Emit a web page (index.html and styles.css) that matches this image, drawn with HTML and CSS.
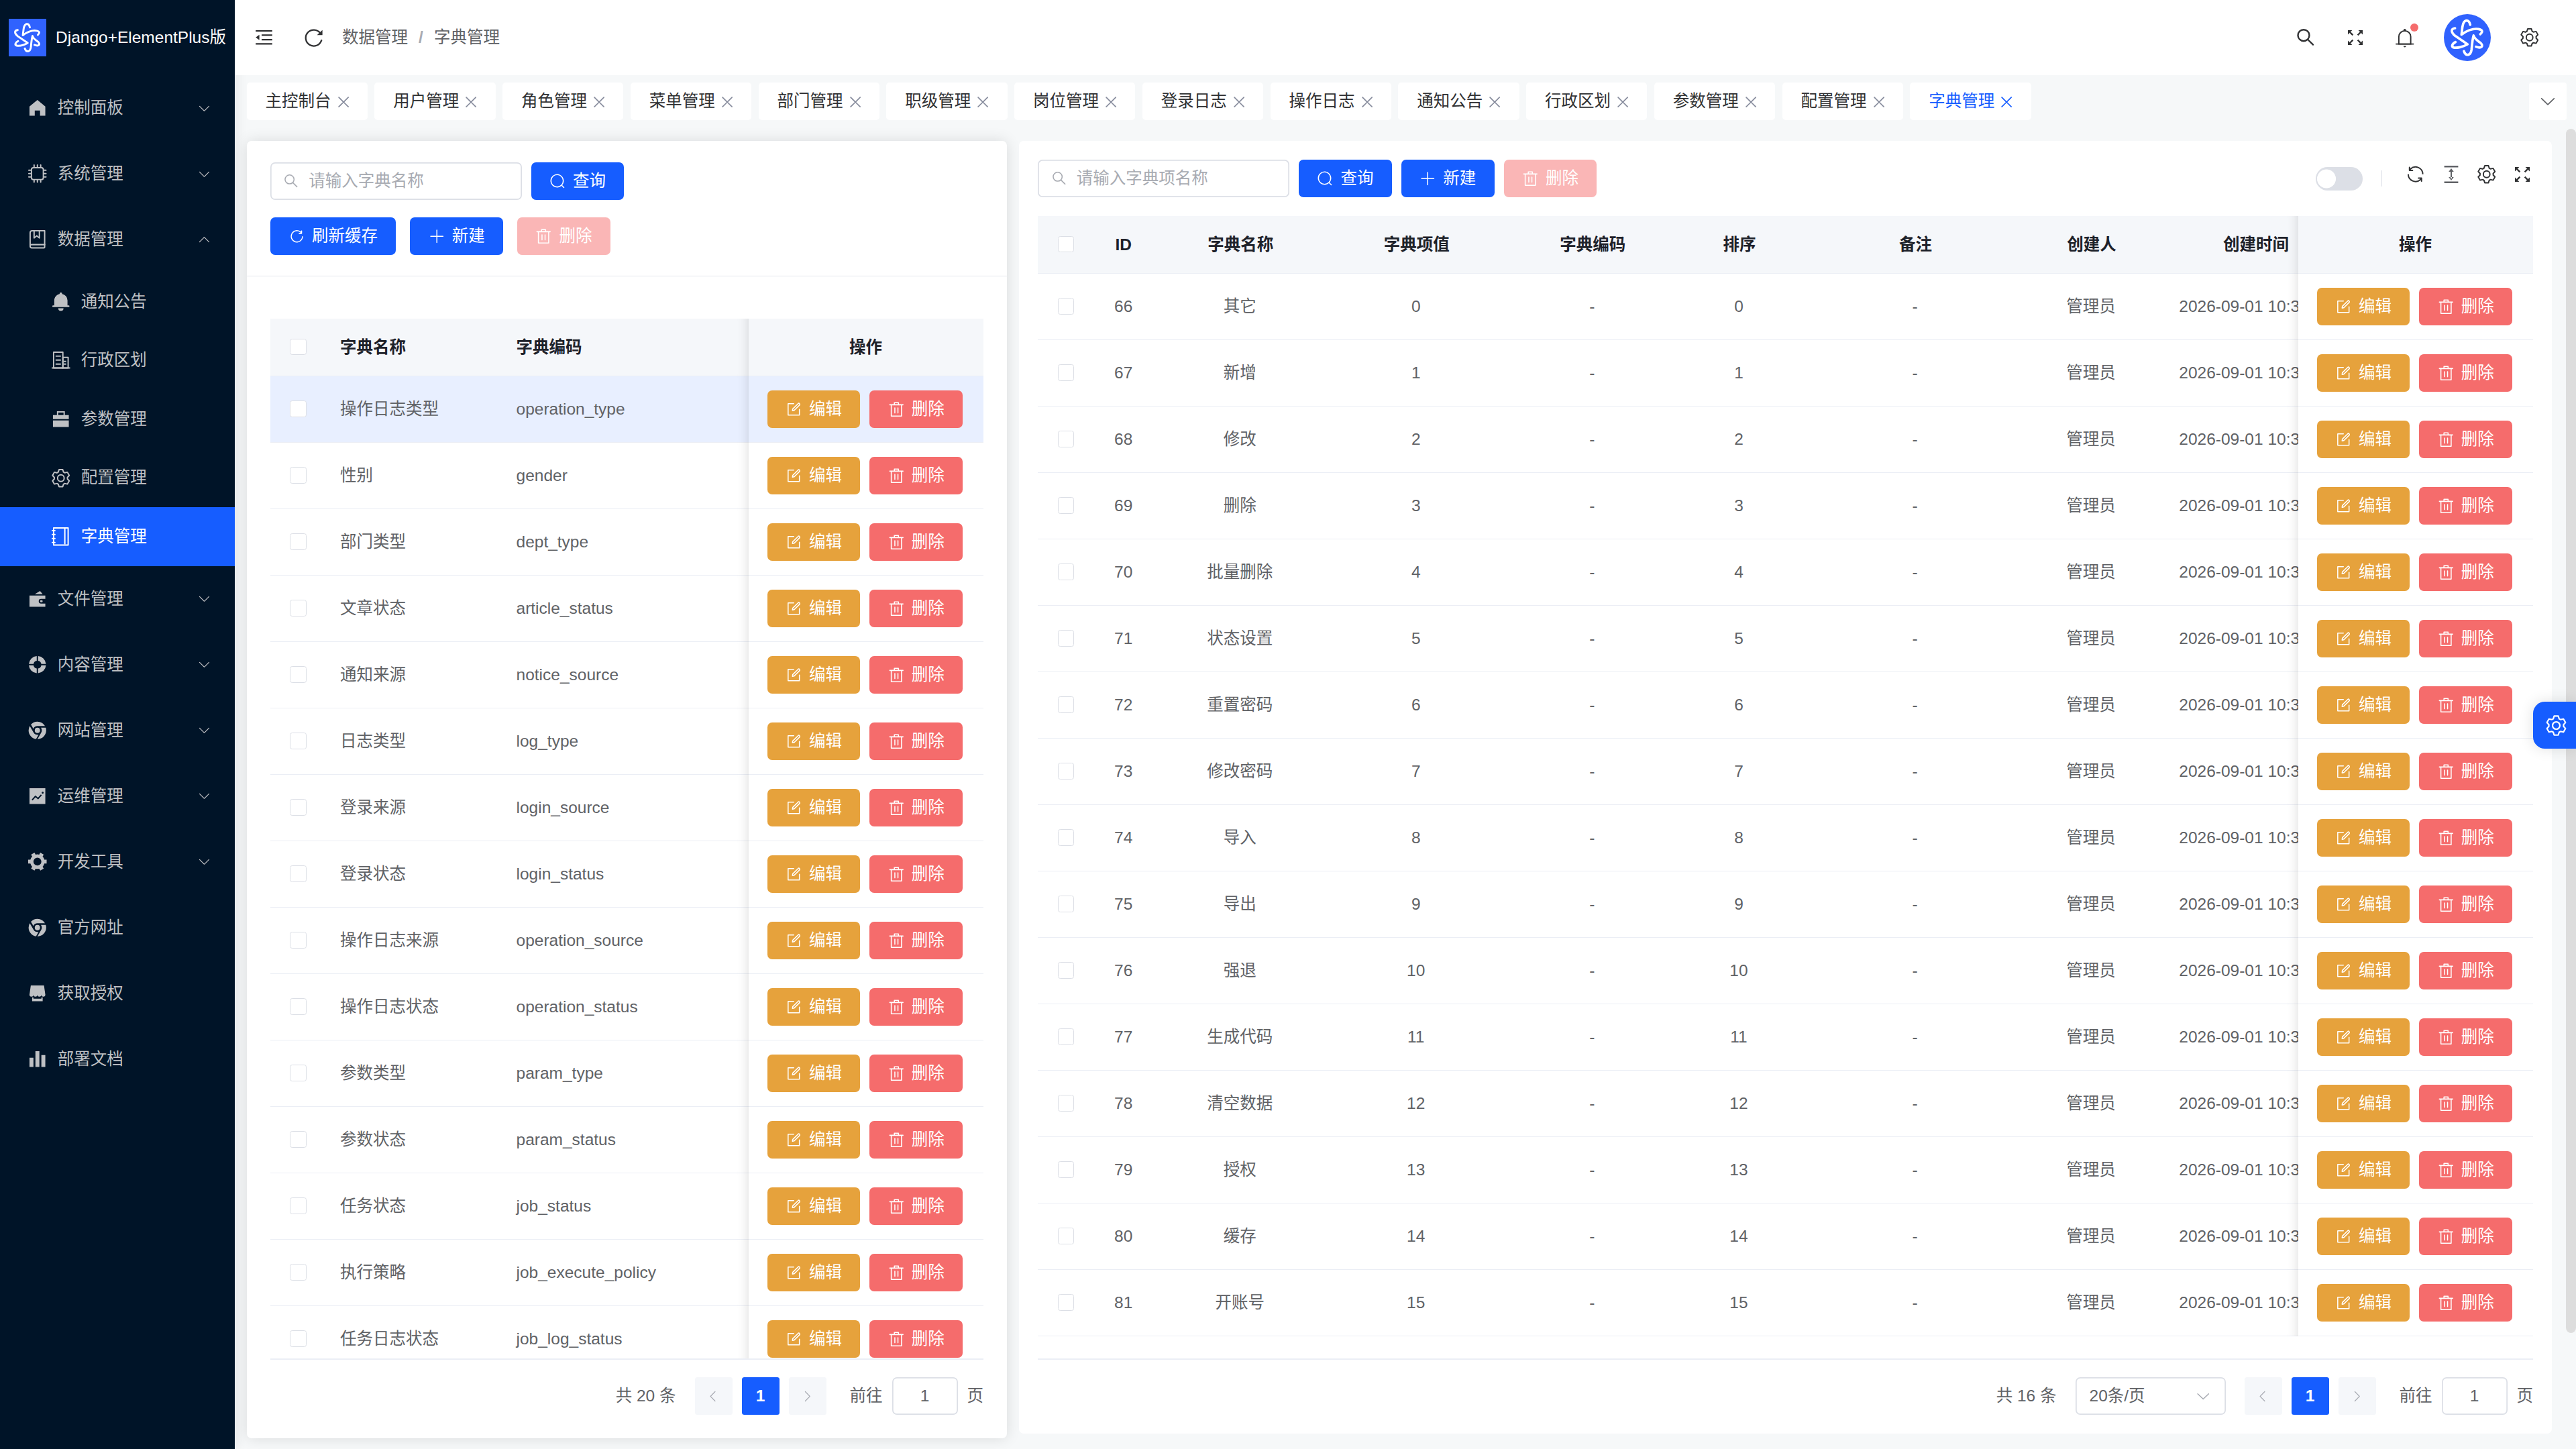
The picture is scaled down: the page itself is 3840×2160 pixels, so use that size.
FILE: index.html
```html
<!DOCTYPE html>
<html lang="zh-CN">
<head>
<meta charset="utf-8">
<title>字典管理</title>
<link rel="stylesheet" href="styles.css">
</head>
<body>
<svg class="sprite" aria-hidden="true">
  <symbol id="i-down" viewBox="0 0 1024 1024"><path d="M831.872 340.864 512 652.672 192.128 340.864a30.592 30.592 0 0 0-42.752 0 29.12 29.12 0 0 0 0 41.6L489.664 714.24a32 32 0 0 0 44.672 0l340.288-331.712a29.12 29.12 0 0 0 0-41.728 30.592 30.592 0 0 0-42.752 0z"/></symbol>
  <symbol id="i-left" viewBox="0 0 1024 1024"><path d="M609.408 149.376 277.76 489.6a32 32 0 0 0 0 44.672l331.648 340.352a29.12 29.12 0 0 0 41.728 0 30.592 30.592 0 0 0 0-42.752L339.264 511.936l311.872-319.872a30.592 30.592 0 0 0 0-42.688 29.12 29.12 0 0 0-41.728 0z"/></symbol>
  <symbol id="i-right" viewBox="0 0 1024 1024"><path d="M340.864 149.312a30.592 30.592 0 0 0 0 42.752L652.736 512 340.864 831.872a30.592 30.592 0 0 0 0 42.752 29.12 29.12 0 0 0 41.728 0L714.24 534.336a32 32 0 0 0 0-44.672L382.592 149.376a29.12 29.12 0 0 0-41.728 0z"/></symbol>
  <symbol id="i-close" viewBox="0 0 1024 1024"><path d="M764.288 214.592 512 466.88 259.712 214.592a31.936 31.936 0 0 0-45.12 45.12L466.752 512 214.528 764.224a31.936 31.936 0 1 0 45.12 45.184L512 557.184l252.288 252.288a31.936 31.936 0 0 0 45.12-45.12L557.12 512.064l252.288-252.352a31.936 31.936 0 1 0-45.12-45.184z"/></symbol>
  <symbol id="i-query" viewBox="0 0 1024 1024"><path d="m795.904 750.72 124.992 124.928a32 32 0 0 1-45.248 45.248L750.656 795.904a416 416 0 1 1 45.248-45.248zM480 832a352 352 0 1 0 0-704 352 352 0 0 0 0 704z"/></symbol>
  <symbol id="i-magnifier" viewBox="0 0 28 28"><g fill="none" stroke="currentColor" stroke-width="var(--w,2.4)" stroke-linecap="round"><circle cx="11" cy="10.7" r="8.5"/><path d="M17.3 17 25 24.6"/></g></symbol>
  <symbol id="i-refresh-right" viewBox="0 0 1024 1024"><path d="M784.512 230.272v-50.56a32 32 0 1 1 64 0v149.056a32 32 0 0 1-32 32H667.52a32 32 0 1 1 0-64h92.992A320 320 0 1 0 844.8 513.152h64a384 384 0 1 1-124.288-282.88z"/></symbol>
  <symbol id="i-refresh" viewBox="0 0 1024 1024"><path d="M771.776 794.88A384 384 0 0 1 128 512h64a320 320 0 0 0 555.712 216.448H654.72a32 32 0 1 1 0-64h149.056a32 32 0 0 1 32 32v148.928a32 32 0 1 1-64 0v-50.56zM276.288 295.616h92.992a32 32 0 0 1 0 64H220.16a32 32 0 0 1-32-32V178.56a32 32 0 0 1 64 0v50.56A384 384 0 0 1 896.128 512h-64a320 320 0 0 0-555.776-216.384z"/></symbol>
  <symbol id="i-plus" viewBox="0 0 1024 1024"><path d="M480 480V128a32 32 0 0 1 64 0v352h352a32 32 0 1 1 0 64H544v352a32 32 0 1 1-64 0V544H128a32 32 0 0 1 0-64h352z"/></symbol>
  <symbol id="i-delete" viewBox="0 0 1024 1024"><path d="M160 256H96a32 32 0 0 1 0-64h256V95.936a32 32 0 0 1 32-32h256a32 32 0 0 1 32 32V192h256a32 32 0 1 1 0 64h-64v672a32 32 0 0 1-32 32H192a32 32 0 0 1-32-32V256zm448-64v-64H416v64h192zM224 896h576V256H224v640zm192-128a32 32 0 0 1-32-32V416a32 32 0 0 1 64 0v320a32 32 0 0 1-32 32zm192 0a32 32 0 0 1-32-32V416a32 32 0 0 1 64 0v320a32 32 0 0 1-32 32z"/></symbol>
  <symbol id="i-edit" viewBox="0 0 1024 1024"><path d="M832 512a32 32 0 1 1 64 0v352a32 32 0 0 1-32 32H160a32 32 0 0 1-32-32V160a32 32 0 0 1 32-32h352a32 32 0 0 1 0 64H192v640h640V512z"/><path d="m469.952 554.24 52.8-7.552L847.104 222.4a32 32 0 1 0-45.248-45.248L477.44 501.44l-7.552 52.8zm422.4-422.4a96 96 0 0 1 0 135.808l-331.84 331.84a32 32 0 0 1-18.112 9.088L436.8 623.68a32 32 0 0 1-36.224-36.224l15.104-105.6a32 32 0 0 1 9.024-18.112l331.904-331.84a96 96 0 0 1 135.744 0z"/></symbol>
  <symbol id="i-setting" viewBox="0 0 1024 1024"><path d="M600.704 64a32 32 0 0 1 30.464 22.208l35.2 109.376c14.784 7.232 28.928 15.36 42.432 24.512l112.384-24.192a32 32 0 0 1 34.432 15.36L944.32 364.8a32 32 0 0 1-4.032 37.504l-77.12 85.12a357.12 357.12 0 0 1 0 49.024l77.12 85.248a32 32 0 0 1 4.032 37.504l-88.704 153.6a32 32 0 0 1-34.432 15.296L708.8 803.904c-13.44 9.088-27.648 17.28-42.368 24.512l-35.264 109.376A32 32 0 0 1 600.704 960H423.296a32 32 0 0 1-30.464-22.208L357.696 828.48a351.616 351.616 0 0 1-42.56-24.64l-112.32 24.256a32 32 0 0 1-34.432-15.36L79.68 659.2a32 32 0 0 1 4.032-37.504l77.12-85.248a357.12 357.12 0 0 1 0-48.896l-77.12-85.248A32 32 0 0 1 79.68 364.8l88.704-153.6a32 32 0 0 1 34.432-15.296l112.32 24.256c13.568-9.152 27.776-17.408 42.56-24.64l35.2-109.312A32 32 0 0 1 423.232 64H600.64zm-23.424 64H446.72l-36.352 113.088-24.512 11.968a294.113 294.113 0 0 0-34.816 20.096l-22.656 15.36-116.224-25.088-65.28 113.152 79.68 88.192-1.92 27.136a293.12 293.12 0 0 0 0 40.192l1.92 27.136-79.808 88.192 65.344 113.152 116.224-25.024 22.656 15.296a294.113 294.113 0 0 0 34.816 20.096l24.512 11.968L446.72 896h130.688l36.48-113.152 24.448-11.904a288.282 288.282 0 0 0 34.752-20.096l22.592-15.296 116.288 25.024 65.28-113.152-79.744-88.192 1.92-27.136a293.12 293.12 0 0 0 0-40.256l-1.92-27.136 79.808-88.128-65.344-113.152-116.288 24.96-22.592-15.232a287.616 287.616 0 0 0-34.752-20.096l-24.448-11.904L577.344 128zM512 320a192 192 0 1 1 0 384 192 192 0 0 1 0-384zm0 64a128 128 0 1 0 0 256 128 128 0 0 0 0-256z"/></symbol>
  <symbol id="i-bell" viewBox="0 0 1024 1024"><path d="M512 64a64 64 0 0 1 64 64v64H448v-64a64 64 0 0 1 64-64z"/><path d="M256 768h512V448a256 256 0 1 0-512 0v320zm256-640a320 320 0 0 1 320 320v384H192V448a320 320 0 0 1 320-320z"/><path d="M96 768h832q32 0 32 32t-32 32H96q-32 0-32-32t32-32zm352 128h128a64 64 0 0 1-128 0z"/></symbol>
  <symbol id="i-bell-filled" viewBox="0 0 1024 1024"><path d="M640 832a128 128 0 0 1-256 0h256zm192-64H134.4a38.4 38.4 0 0 1 0-76.8H192V448c0-154.88 110.08-284.16 256.32-313.6a64 64 0 1 1 127.36 0A320.128 320.128 0 0 1 832 448v243.2h57.6a38.4 38.4 0 0 1 0 76.8H832z"/></symbol>
  <symbol id="i-home" viewBox="0 0 1024 1024"><path d="M512 128 128 447.936V896h255.936V640H640v256h255.936V447.936z"/></symbol>
  <symbol id="i-cpu" viewBox="0 0 1024 1024"><g fill="none" stroke="currentColor" stroke-width="64" stroke-linecap="round"><rect x="224" y="224" width="576" height="576" rx="96"/><path d="M512 96v100M672 96v100M352 96v100M512 928V828M672 928V828M352 928V828M96 512h100M96 672h100M96 352h100M928 512H828M928 672H828M928 352H828"/></g></symbol>
  <symbol id="i-collection" viewBox="0 0 1024 1024"><path d="M192 736h640V128H256a64 64 0 0 0-64 64v544zm64-672h608a32 32 0 0 1 32 32v672a32 32 0 0 1-32 32H160l-32 57.536V192A128 128 0 0 1 256 64z"/><path d="M240 800a48 48 0 1 0 0 96h592v-96H240zm0-64h656v160a64 64 0 0 1-64 64H240a112 112 0 0 1 0-224zm144-608v250.88l96-76.8 96 76.8V128H384zm-64-64h320v381.44a32 32 0 0 1-51.968 24.96L480 384l-108.032 86.4A32 32 0 0 1 320 445.44V64z"/></symbol>
  <symbol id="i-office" viewBox="0 0 1024 1024"><path d="M192 128v704h384V128H192zm-32-64h448a32 32 0 0 1 32 32v768a32 32 0 0 1-32 32H160a32 32 0 0 1-32-32V96a32 32 0 0 1 32-32z"/><path d="M256 256h256v64H256v-64zm0 192h256v64H256v-64zm0 192h256v64H256v-64zm384-128h128v64H640v-64zm0 128h128v64H640v-64zM64 832h896v64H64v-64z"/><path d="M640 384v448h192V384H640zm-32-64h256a32 32 0 0 1 32 32v512a32 32 0 0 1-32 32H608a32 32 0 0 1-32-32V352a32 32 0 0 1 32-32z"/></symbol>
  <symbol id="i-briefcase" viewBox="0 0 1024 1024"><path d="M320 320V128h384v192h192v192H128V320h192zM128 576h768v320H128V576zm256-256h256.064V192H384v128z"/></symbol>
  <symbol id="i-notebook" viewBox="0 0 1024 1024"><path d="M192 128v768h640V128H192zm-32-64h704a32 32 0 0 1 32 32v832a32 32 0 0 1-32 32H160a32 32 0 0 1-32-32V96a32 32 0 0 1 32-32z"/><path d="M672 128h64v768h-64zM96 192h128q32 0 32 32t-32 32H96q-32 0-32-32t32-32zm0 192h128q32 0 32 32t-32 32H96q-32 0-32-32t32-32zm0 192h128q32 0 32 32t-32 32H96q-32 0-32-32t32-32zm0 192h128q32 0 32 32t-32 32H96q-32 0-32-32t32-32z"/></symbol>
  <symbol id="i-wallet" viewBox="0 0 1024 1024"><path d="M688 512a112 112 0 1 0 0 224h208v160H128V352h768v160H688zm32 160h-32a48 48 0 0 1 0-96h32a48 48 0 0 1 0 96zm-80-544 128 160H384l256-160z"/></symbol>
  <symbol id="i-help" viewBox="0 0 1024 1024"><path d="M926.784 480H701.312A192.512 192.512 0 0 0 544 322.688V97.216A416.064 416.064 0 0 1 926.784 480zm0 64A416.064 416.064 0 0 1 544 926.784V701.312A192.512 192.512 0 0 0 701.312 544h225.472zM97.28 544h225.472A192.512 192.512 0 0 0 480 701.312v225.472A416.064 416.064 0 0 1 97.216 544zm0-64A416.064 416.064 0 0 1 480 97.216v225.472A192.512 192.512 0 0 0 322.688 480H97.216z"/></symbol>
  <symbol id="i-chrome" viewBox="0 0 1024 1024"><path d="M938.67 512.01c0-44.59-6.82-87.6-19.54-128H682.67a212.372 212.372 0 0 1 42.67 128c.06 38.71-10.45 76.7-30.42 109.87l-182.91 316.8c235.65-.01 426.66-191.02 426.66-426.67z"/><circle cx="512" cy="512" r="128"/><path d="M394.45 333.96A213.336 213.336 0 0 1 512 298.67h369.58A426.503 426.503 0 0 0 512 85.34a425.644 425.644 0 0 0-314.36 138.2l118.14 204.63a213.397 213.397 0 0 1 78.67-94.21z"/><path d="M512.01 725.34a213.32 213.32 0 0 1-184.77-106.67L142.49 298.56A425.9 425.9 0 0 0 85.34 512c0 212.64 155.56 388.85 359.36 421l118.2-204.7a213.4 213.4 0 0 1-50.9-2.96z"/></symbol>
  <symbol id="i-trend" viewBox="0 0 1024 1024"><path d="M128 896V128h768v768H128zm291.712-327.296 128 102.4 180.16-201.792-47.744-42.624-139.84 156.608-128-102.4-180.16 201.792 47.744 42.624 139.84-156.608zM816 352a48 48 0 1 0-96 0 48 48 0 0 0 96 0z"/></symbol>
  <symbol id="i-tools" viewBox="0 0 1024 1024"><path d="M764.416 254.72a351.68 351.68 0 0 1 86.336 149.184H960v192.064H850.752a351.68 351.68 0 0 1-86.336 149.312l54.72 94.72-166.272 96-54.592-94.72a352.64 352.64 0 0 1-172.48 0L371.136 936l-166.272-96 54.72-94.72a351.68 351.68 0 0 1-86.336-149.312H64v-192h109.248a351.68 351.68 0 0 1 86.336-149.312L204.8 160l166.208-96h.192l54.656 94.592a352.64 352.64 0 0 1 172.48 0L652.8 64h.128L819.2 160l-54.72 94.72zM704 499.968a192 192 0 1 0-384 0 192 192 0 0 0 384 0z"/></symbol>
  <symbol id="i-shop" viewBox="0 0 1024 1024"><path d="M704 704h64v192H256V704h64v64h384v-64zm188.544-152.192C894.528 559.616 896 567.616 896 576a96 96 0 1 1-192 0 96 96 0 1 1-192 0 96 96 0 1 1-192 0 96 96 0 1 1-192 0c0-8.384 1.408-16.384 3.392-24.192L192 128h640l60.544 423.808z"/></symbol>
  <symbol id="i-histogram" viewBox="0 0 1024 1024"><path d="M416 896V128h192v768H416zm-288 0V448h192v448H128zm576 0V320h192v576H704z"/></symbol>
  <symbol id="i-fold" viewBox="0 0 28 28"><path d="M1.2 3h24.6v2.3H1.2zM10 9.3h15.8v2.3H10zM10 15.9h15.8v2.3H10zM1.2 22.3h24.6v2.3H1.2zM6.6 9.8v8L1.2 13.8z"/></symbol>
  <symbol id="i-reload" viewBox="0 0 28 28"><path d="M25.2 18.2A12 12 0 1 1 23.4 7.4" fill="none" stroke="currentColor" stroke-width="2.3" stroke-linecap="round"/><path d="M26.6 2.8v7.4h-8z"/></symbol>
  <symbol id="i-full" viewBox="0 0 28 28"><path d="m6 6 4.4 4.4M22 6l-4.4 4.4M6 22l4.4-4.4M22 22l-4.4-4.4" stroke="currentColor" stroke-width="2.4"/><path d="M3 3h6.4L3 9.4zM25 3h-6.4L25 9.4zM3 25h6.4L3 18.6zM25 25h-6.4l6.4-6.4z"/></symbol>
  <symbol id="i-height" viewBox="0 0 28 28"><path d="M3.6 1h20.8v2.6H3.6zM3.6 24.4h20.8V27H3.6zM13 8h2v12h-2zM14 5l3.8 5h-7.6zM14 23l3.8-5h-7.6z"/></symbol>
  <symbol id="i-star" viewBox="0 0 210 210"><g fill="none" stroke="#fff" stroke-width="11" stroke-linecap="round" stroke-linejoin="round"><path d="M118 48C112 20 88 22 83 58L79 92C98 76 130 62 156 67C175 71 174 80 163 90"/><path d="M50 63C30 66 32 82 50 97L106 135C84 148 58 152 45 150C32 146 36 134 52 125"/><path d="M90 166C98 190 120 187 124 158C126 135 128 112 133 96C138 112 150 118 163 128C180 142 168 156 144 146"/></g></symbol>
</svg>

<div class="layout">
  <aside class="sidebar">
    <div class="brand"><span class="brand-logo"><svg><use href="#i-star"/></svg></span><span>Django+ElementPlus版</span></div>
    <nav class="menu">
      <a class="item"><svg><use href="#i-home"/></svg>控制面板<svg class="arrow"><use href="#i-down"/></svg></a>
      <a class="item"><svg><use href="#i-cpu"/></svg>系统管理<svg class="arrow"><use href="#i-down"/></svg></a>
      <a class="item"><svg><use href="#i-collection"/></svg>数据管理<svg class="arrow open"><use href="#i-down"/></svg></a>
      <a class="item sub"><svg><use href="#i-bell-filled"/></svg>通知公告</a>
      <a class="item sub"><svg><use href="#i-office"/></svg>行政区划</a>
      <a class="item sub"><svg><use href="#i-briefcase"/></svg>参数管理</a>
      <a class="item sub"><svg><use href="#i-setting"/></svg>配置管理</a>
      <a class="item sub active"><svg><use href="#i-notebook"/></svg>字典管理</a>
      <a class="item"><svg><use href="#i-wallet"/></svg>文件管理<svg class="arrow"><use href="#i-down"/></svg></a>
      <a class="item"><svg><use href="#i-help"/></svg>内容管理<svg class="arrow"><use href="#i-down"/></svg></a>
      <a class="item"><svg><use href="#i-chrome"/></svg>网站管理<svg class="arrow"><use href="#i-down"/></svg></a>
      <a class="item"><svg><use href="#i-trend"/></svg>运维管理<svg class="arrow"><use href="#i-down"/></svg></a>
      <a class="item"><svg><use href="#i-tools"/></svg>开发工具<svg class="arrow"><use href="#i-down"/></svg></a>
      <a class="item"><svg><use href="#i-chrome"/></svg>官方网址</a>
      <a class="item"><svg><use href="#i-shop"/></svg>获取授权</a>
      <a class="item"><svg><use href="#i-histogram"/></svg>部署文档</a>
    </nav>
  </aside>

  <div class="page">
    <header class="topbar">
      <svg class="ic28"><use href="#i-fold"/></svg>
      <svg class="ic28 reload"><use href="#i-reload"/></svg>
      <div class="crumbs"><span>数据管理</span><span class="sep">/</span><span>字典管理</span></div>
      <div class="tools">
        <svg class="ic28"><use href="#i-magnifier"/></svg>
        <svg class="ic28 t-full"><use href="#i-full"/></svg>
        <span class="bell"><svg class="ic31"><use href="#i-bell"/></svg><i class="dot"></i></span>
        <span class="avatar"><svg><use href="#i-star"/></svg></span>
        <svg class="ic31"><use href="#i-setting"/></svg>
      </div>
    </header>

    <div class="tabs" id="tabs"></div>

    <main class="cards">
      <section class="card card-left">
        <div class="search-form">
          <div class="row gap14">
            <label class="input"><svg><use href="#i-magnifier"/></svg>请输入字典名称</label>
            <button class="btn primary"><svg><use href="#i-query"/></svg>查询</button>
          </div>
          <div class="row gap21">
            <button class="btn primary"><svg><use href="#i-refresh-right"/></svg>刷新缓存</button>
            <button class="btn primary"><svg><use href="#i-plus"/></svg>新建</button>
            <button class="btn danger off"><svg><use href="#i-delete"/></svg>删除</button>
          </div>
        </div>
        <div class="table-wrap">
          <table class="dict">
            <colgroup><col class="w-check"><col class="w-name"><col><col class="w-op"></colgroup>
            <thead><tr><th><i class="check"></i></th><th>字典名称</th><th>字典编码</th><th class="fixed">操作</th></tr></thead>
            <tbody id="dict-rows"></tbody>
          </table>
        </div>
        <div class="pager">
          <span>共 20 条</span>
          <div class="pages"><b><svg><use href="#i-left"/></svg></b><b class="on">1</b><b><svg><use href="#i-right"/></svg></b></div>
          <div class="jump"><span>前往</span><span class="num">1</span><span>页</span></div>
        </div>
      </section>

      <section class="card card-right">
        <div class="row gap14">
          <label class="input"><svg><use href="#i-magnifier"/></svg>请输入字典项名称</label>
          <button class="btn primary"><svg><use href="#i-query"/></svg>查询</button>
          <button class="btn primary"><svg><use href="#i-plus"/></svg>新建</button>
          <button class="btn danger off"><svg><use href="#i-delete"/></svg>删除</button>
          <div class="table-tools">
            <span class="switch"></span>
            <span class="divider"></span>
            <div class="tool-icons">
              <svg class="ic31"><use href="#i-refresh"/></svg>
              <svg class="ic28 grey"><use href="#i-height"/></svg>
              <svg class="ic31"><use href="#i-setting"/></svg>
              <svg class="ic28"><use href="#i-full"/></svg>
            </div>
          </div>
        </div>
        <div class="table-wrap">
          <table class="items">
            <colgroup><col class="w-check"><col class="w-id"><col class="w-name"><col class="w-name"><col class="w-name"><col class="w-sort"><col class="w-note"><col class="w-sort"><col class="w-time"><col class="w-op"></colgroup>
            <thead><tr><th><i class="check"></i></th><th>ID</th><th>字典名称</th><th>字典项值</th><th>字典编码</th><th>排序</th><th>备注</th><th>创建人</th><th>创建时间</th><th class="fixed">操作</th></tr></thead>
            <tbody id="item-rows"></tbody>
          </table>
        </div>
        <div class="pager">
          <span>共 16 条</span>
          <span class="select">20条/页<svg><use href="#i-down"/></svg></span>
          <div class="pages"><b><svg><use href="#i-left"/></svg></b><b class="on">1</b><b><svg><use href="#i-right"/></svg></b></div>
          <div class="jump"><span>前往</span><span class="num">1</span><span>页</span></div>
        </div>
      </section>
    </main>
  </div>
</div>

<div class="scroll-thumb"></div>
<div class="float-setting"><svg><use href="#i-setting"/></svg></div>
<script src="script.js"></script>
</body>
</html>
```
FILE: styles.css
```css
* { box-sizing: border-box; }

body {
  margin: 0;
  height: 2160px;
  overflow: hidden;
  position: relative;
  background: #f6f8f9;
  color: #606266;
  font: 24.5px/40px "Liberation Sans", "Noto Sans CJK SC", sans-serif;
}

svg { fill: currentColor; display: block; flex: none; }
.sprite { position: absolute; width: 0; height: 0; }
.ic28 { width: 28px; height: 28px; }
.ic31 { width: 31.5px; height: 31.5px; }

.layout { display: flex; height: 2160px; }

/* sidebar */
.sidebar {
  width: 350px;
  flex: none;
  background: #001428;
  color: #bfc1c4;
  box-shadow: 3.5px 0 14px rgba(29, 35, 41, .07);
}
.brand {
  height: 112px;
  display: flex;
  align-items: center;
  padding-left: 13px;
  gap: 14px;
  color: #fff;
  white-space: nowrap;
}
.brand-logo { width: 56px; height: 56px; background: #3062fe; }
.brand-logo svg { width: 56px; height: 56px; }
.item {
  display: flex;
  align-items: center;
  height: 98px;
  padding: 0 35px 0 40.25px;
}
.item > svg { width: 31.5px; height: 31.5px; margin-right: 14px; }
.item > .arrow { width: 21px; height: 21px; margin: 0 0 0 auto; }
.item > .arrow.open { transform: rotate(180deg); }
.item.sub { height: 87.5px; padding-left: 75.25px; }
.item.active { background: #165dff; color: #fff; }

/* top bar */
.page { flex: 1; min-width: 0; display: flex; flex-direction: column; }
.topbar {
  height: 112px;
  flex: none;
  display: flex;
  align-items: center;
  padding: 0 53.5px 0 30px;
  background: #fff;
  color: #303133;
  position: relative;
}
.reload { margin-left: 46px; }
.crumbs { display: flex; margin-left: 28px; color: #606266; }
.sep { margin: 0 16px 0 16px; width: 7px; color: #a8abb2; font-weight: 700; }
.tools { display: flex; align-items: center; margin-left: auto; }
.t-full { margin-left: 46px; }
.bell { position: relative; margin: 2px 42.5px 0 43.5px; }
.dot {
  position: absolute;
  right: -5px;
  top: -6px;
  width: 12px;
  height: 12px;
  border-radius: 50%;
  background: #f56c6c;
}
.avatar {
  width: 70px;
  height: 70px;
  border-radius: 50%;
  background: #3062fe;
  margin-right: 42.5px;
}
.avatar svg { width: 70px; height: 70px; }

/* tabs */
.tabs {
  display: flex;
  gap: 10.5px;
  padding: 11px 14px 31px 17.5px;
}
.tab {
  display: flex;
  align-items: center;
  width: 180.25px;
  height: 56px;
  padding-left: 28px;
  background: #fff;
  color: #303133;
  border-radius: 5px;
}
.tab svg { width: 26.25px; height: 26.25px; margin: 3px 0 0 5px; color: #868b9c; }
.tab.on, .tab.on svg { color: #165dff; }
.tab-more {
  margin-left: auto;
  width: 56px;
  height: 56px;
  display: grid;
  place-items: center;
  background: #fff;
  border-radius: 4px;
}
.tab-more svg { width: 28px; height: 28px; }

/* cards */
.cards { display: flex; align-items: flex-start; gap: 18px; padding: 0 36px 0 17.5px; }
.card { background: #fff; border-radius: 7px; }
.card-left {
  width: 1133.5px;
  height: 1934px;
  flex: none;
  box-shadow: 0 0 21px rgba(0, 0, 0, .12);
}
.card-right { flex: 1; min-width: 0; height: 1927px; padding: 28px; }
.search-form {
  display: grid;
  gap: 26px;
  padding: 32px 35px 31px;
  height: 202px;
  border-bottom: 1px solid #e4e7ed;
}
.row { display: flex; align-items: center; }
.gap14 { gap: 14px; }
.gap21 { gap: 21px; }

.input {
  display: flex;
  align-items: center;
  width: 375px;
  height: 56px;
  padding-left: 19.25px;
  border-radius: 7px;
  box-shadow: inset 0 0 0 1.75px #dcdfe6;
  color: #a8abb2;
}
.input svg { width: 22px; height: 22px; margin: 0 15.2px 0 1.3px; --w: 2; }

.btn {
  display: inline-flex;
  align-items: center;
  justify-content: center;
  height: 56px;
  padding: 0 27.4px;
  border: 0;
  border-radius: 7px;
  color: #fff;
  font: inherit;
  white-space: nowrap;
}
.btn svg { width: 24.5px; height: 24.5px; margin-right: 10.5px; }
.primary { background: #165dff; }
.warning { background: #e6a23c; }
.danger { background: #f56c6c; }
.danger.off { background: #fab6b6; }

/* tables */
.table-wrap { overflow: hidden; border-bottom: 2px solid #ebeef5; }
.card-left .table-wrap { margin: 63px 35px 0; height: 1552px; }
.card-right .table-wrap { margin-top: 28px; height: 1705px; }
table { table-layout: fixed; border-collapse: separate; border-spacing: 0; }
.dict { width: 1063px; }
.items { width: 2324px; }
.w-check { width: 84px; }
.w-id { width: 87.5px; }
.w-name { width: 262.5px; }
.w-sort { width: 175px; }
.w-note, .w-op { width: 350px; }
.w-time { width: 315px; }
th, td {
  height: 99px;
  padding: 0 14px;
  border-bottom: 1px solid #ebeef5;
  background: #fff;
  text-align: center;
  white-space: nowrap;
}
th { height: 86px; background: #f5f7fa; color: #1d2129; font-weight: 700; }
.items td:nth-child(n+3) { padding-right: 17px; }
.items th:nth-child(n+3) { padding-right: 15px; }
.dict th:nth-child(-n+3), .dict td:nth-child(-n+3) { text-align: left; padding-left: 20.5px; }
.dict th:first-child, .dict td:first-child { text-align: center; padding: 0; }
.current td { background: #e8efff; }
.fixed { position: sticky; right: 0; }
.fixed::before {
  content: "";
  position: absolute;
  top: 0;
  bottom: -1px;
  left: -17.5px;
  width: 17.5px;
  box-shadow: inset -17.5px 0 17.5px -17.5px rgba(0, 0, 0, .15);
}
.check {
  display: inline-block;
  width: 24.5px;
  height: 24.5px;
  margin-bottom: 4px;
  border: 1px solid #dcdfe6;
  border-radius: 3.5px;
  background: #fff;
  vertical-align: middle;
}
.ops { display: flex; gap: 14px; padding-left: 14px; }
.items .ops { padding-left: 13.5px; }

/* pagination */
.pager {
  display: flex;
  justify-content: flex-end;
  align-items: center;
  height: 56px;
  gap: 28px;
  margin-top: 26px;
}
.card-left .pager { padding-right: 35px; }
.pages, .jump { display: flex; align-items: center; gap: 14px; }
.jump { margin-left: 7px; }
.pages b {
  width: 56px;
  height: 56px;
  display: grid;
  place-items: center;
  border-radius: 3.5px;
  background: #f5f7fa;
  color: #a8abb2;
}
.pages b.on { background: #165dff; color: #fff; }
.pages svg { width: 21px; height: 21px; }
.num {
  width: 98px;
  height: 56px;
  line-height: 56px;
  text-align: center;
  border-radius: 7px;
  box-shadow: inset 0 0 0 1.75px #dcdfe6;
}
.select {
  display: flex;
  align-items: center;
  justify-content: space-between;
  width: 224px;
  height: 56px;
  padding: 0 21px;
  border-radius: 7px;
  box-shadow: inset 0 0 0 1.75px #dcdfe6;
}
.select svg { width: 24.5px; height: 24.5px; color: #a8abb2; }

/* table toolbar */
.table-tools { display: flex; align-items: center; margin-left: auto; }
.switch {
  width: 70px;
  height: 35px;
  border-radius: 18px;
  background: radial-gradient(circle at 16px 50%, #fff 13.6px, transparent 14.4px) #dcdfe6;
}
.divider { width: 1px; height: 24px; margin: 0 34px 0 28px; background: #dcdfe6; }
.tool-icons {
  display: flex;
  align-items: center;
  padding: 0 2px 12px 0;
  gap: 23.3px;
  color: #303133;
}
.grey { color: #606266; }

/* overlays */
.scroll-thumb {
  position: absolute;
  right: 0;
  top: 192px;
  width: 15.5px;
  height: 1795px;
  border-radius: 8px;
  background: #ddd;
}
.float-setting {
  position: absolute;
  right: 0;
  top: 1046px;
  width: 64px;
  height: 70px;
  padding: 17.5px 0 0 17px;
  border-radius: 17.5px 0 0 17.5px;
  background: #165dff;
  color: #fff;
  box-shadow: 0 0 21px rgba(0, 0, 0, .12);
}
.float-setting svg { width: 35px; height: 35px; }
```
FILE: script.js
```js
const icon = (name) => `<svg><use href="#i-${name}"/></svg>`;

const tabs = ['主控制台', '用户管理', '角色管理', '菜单管理', '部门管理', '职级管理', '岗位管理',
  '登录日志', '操作日志', '通知公告', '行政区划', '参数管理', '配置管理', '字典管理'];
document.getElementById('tabs').innerHTML = tabs
  .map((t) => `<div class="tab${t === '字典管理' ? ' on' : ''}">${t}${icon('close')}</div>`)
  .join('') + `<div class="tab-more">${icon('down')}</div>`;

const check = '<td><i class="check"></i></td>';
const ops = `<td class="fixed"><div class="ops"><button class="btn warning">${icon('edit')}编辑</button><button class="btn danger">${icon('delete')}删除</button></div></td>`;

const dicts = [
  ['操作日志类型', 'operation_type'], ['性别', 'gender'], ['部门类型', 'dept_type'],
  ['文章状态', 'article_status'], ['通知来源', 'notice_source'], ['日志类型', 'log_type'],
  ['登录来源', 'login_source'], ['登录状态', 'login_status'], ['操作日志来源', 'operation_source'],
  ['操作日志状态', 'operation_status'], ['参数类型', 'param_type'], ['参数状态', 'param_status'],
  ['任务状态', 'job_status'], ['执行策略', 'job_execute_policy'], ['任务日志状态', 'job_log_status'],
];
document.getElementById('dict-rows').innerHTML = dicts
  .map(([name, code], i) => `<tr${i ? '' : ' class="current"'}>${check}<td>${name}</td><td>${code}</td>${ops}</tr>`)
  .join('');

const items = ['其它', '新增', '修改', '删除', '批量删除', '状态设置', '重置密码', '修改密码',
  '导入', '导出', '强退', '生成代码', '清空数据', '授权', '缓存', '开账号'];
document.getElementById('item-rows').innerHTML = items
  .map((name, i) => `<tr>${check}<td>${66 + i}</td><td>${name}</td><td>${i}</td><td>-</td><td>${i}</td><td>-</td><td>管理员</td><td>2026-09-01 10:30:00</td>${ops}</tr>`)
  .join('');
```
